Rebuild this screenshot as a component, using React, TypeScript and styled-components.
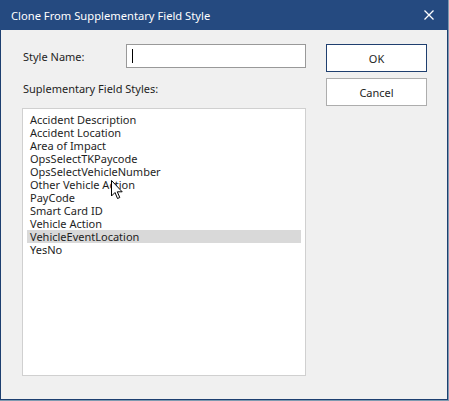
import React from "react";
import styled, { createGlobalStyle } from "styled-components";

const Global = createGlobalStyle`
  html, body { margin: 0; padding: 0; }
  body {
    background: #7f9bb0;
    width: 449px;
    height: 401px;
    overflow: hidden;
    font-family: "Noto Sans", "Open Sans", sans-serif;
  }
`;

const Window = styled.div`
  position: relative;
  width: 448px;
  height: 400px;
  box-sizing: border-box;
  border: 1px solid #1d3f70;
  border-top: none;
  background: #f0f0f0;
  display: flex;
  flex-direction: column;
`;

const TitleBar = styled.div`
  height: 30px;
  flex: none;
  background: #254a80;
  color: #ffffff;
  display: flex;
  align-items: center;
  justify-content: space-between;
  padding: 0 14px 0 11px;
  font-size: 11.2px;
  margin: 0 -1px;
`;

const Title = styled.span`
  letter-spacing: 0;
`;

const Close = styled.svg`
  width: 10px;
  height: 10px;
`;

const Body = styled.div`
  flex: 1;
  display: flex;
  padding: 14px 20px 21px 21px;
  gap: 20px;
`;

const LeftCol = styled.div`
  width: 284px;
  display: flex;
  flex-direction: column;
`;

const RightCol = styled.div`
  width: 101px;
  display: flex;
  flex-direction: column;
  gap: 6px;
`;

const FieldRow = styled.div`
  display: flex;
  align-items: center;
  height: 24px;
`;

const Label = styled.span`
  font-size: 11px;
  color: #1e1e1e;
  padding-left: 1px;
`;

const NameLabel = styled(Label)`
  width: 103px;
`;

const TextBox = styled.div`
  width: 180px;
  height: 24px;
  box-sizing: border-box;
  border: 1px solid #999999;
  background: #ffffff;
  display: flex;
  align-items: center;
  padding-left: 5px;
`;

const Caret = styled.div`
  width: 1px;
  height: 14px;
  background: #000000;
`;

const ListLabel = styled(Label)`
  margin-top: 12px;
  height: 18px;
  line-height: 18px;
`;

const ListBox = styled.div`
  margin-top: 10px;
  height: 268px;
  box-sizing: border-box;
  border: 1px solid #d0d0d0;
  background: #ffffff;
  padding: 4px 4px 2px;
  position: relative;
`;

const Item = styled.div<{ $selected?: boolean }>`
  height: 13px;
  line-height: 13px;
  font-size: 11px;
  color: #1e1e1e;
  padding-left: 3px;
  background: ${(p) => (p.$selected ? "#d9d9d9" : "transparent")};
  white-space: nowrap;
`;

const Button = styled.div<{ $default?: boolean }>`
  height: 28px;
  box-sizing: border-box;
  border: 1px solid ${(p) => (p.$default ? "#1f3f6f" : "#adadad")};
  background: #ffffff;
  display: flex;
  align-items: center;
  justify-content: center;
  font-size: 11px;
  color: #1e1e1e;
`;

const Pointer = styled.svg`
  position: absolute;
  left: 88px;
  top: 71px;
  width: 13px;
  height: 20px;
`;

const items = [
  "Accident Description",
  "Accident Location",
  "Area of Impact",
  "OpsSelectTKPaycode",
  "OpsSelectVehicleNumber",
  "Other Vehicle Action",
  "PayCode",
  "Smart Card ID",
  "Vehicle Action",
  "VehicleEventLocation",
  "YesNo",
];

export default function App() {
  return (
    <>
      <Global />
      <Window>
        <TitleBar>
          <Title>Clone From Supplementary Field Style</Title>
          <Close viewBox="0 0 10 10">
            <path d="M0.5 0.5 L9.5 9.5 M9.5 0.5 L0.5 9.5" stroke="#ffffff" strokeWidth="1.3" />
          </Close>
        </TitleBar>
        <Body>
          <LeftCol>
            <FieldRow>
              <NameLabel>Style Name:</NameLabel>
              <TextBox>
                <Caret />
              </TextBox>
            </FieldRow>
            <ListLabel>Suplementary Field Styles:</ListLabel>
            <ListBox>
              {items.map((it) => (
                <Item key={it} $selected={it === "VehicleEventLocation"}>
                  {it}
                </Item>
              ))}
              <Pointer viewBox="0 0 13 20">
                <path
                  d="M0.5 0.5 L0.5 16 L4 12.5 L6.5 18.5 L8.8 17.5 L6.3 11.8 L11.2 11.8 Z"
                  fill="#ffffff"
                  stroke="#000000"
                  strokeWidth="1"
                  strokeLinejoin="round"
                />
              </Pointer>
            </ListBox>
          </LeftCol>
          <RightCol>
            <Button $default>OK</Button>
            <Button>Cancel</Button>
          </RightCol>
        </Body>
      </Window>
    </>
  );
}
